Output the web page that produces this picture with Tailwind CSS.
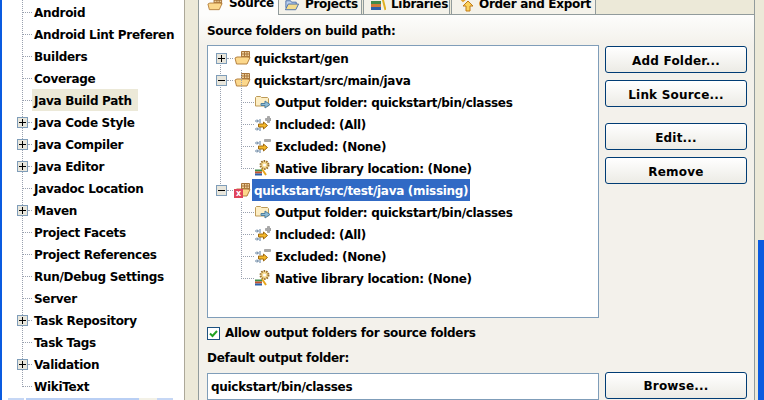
<!DOCTYPE html>
<html lang="en">
  <head>
    <meta charset="UTF-8" />
    <script src="https://cdn.jsdelivr.net/npm/@tailwindcss/browser@4"></script>
    <title>Java Build Path</title>
  </head>
  <body class="w-[764px] h-[400px] overflow-hidden bg-[#ece9d8] font-['DejaVu_Sans',sans-serif] font-bold text-[12px] leading-[16px] tracking-[-0.3px] whitespace-nowrap text-black">
    <svg class="hidden">
      <symbol id="plus" viewBox="0 0 11 11">
        <rect x=".5" y=".5" width="10" height="10" fill="#e8e6dc" stroke="#7f9db9" />
        <path d="M2 5.500h7M5.500 2v7" stroke="#000" />
      </symbol>
      <symbol id="minus" viewBox="0 0 11 11">
        <rect x=".5" y=".5" width="10" height="10" fill="#e8e6dc" stroke="#7f9db9" />
        <path d="M2 5.500h7" stroke="#000" />
      </symbol>
      <symbol id="srcfolder" viewBox="0 0 17 16">
        <path d="M7.500 1.500h8v7h-8z" fill="#eccf9a" stroke="#a8743a" />
        <path d="M7.500 4h8M7.500 6.500h8M10.500 1.500v5M13 1.500v5" stroke="#a8743a" />
        <path d="M1 8l2-1h10l3 .5-3 6.500H2.500z" fill="#fcd88c" stroke="#b5813f" />
      </symbol>
      <symbol id="outfolder" viewBox="0 0 17 16">
        <path d="M1.500 12V3.500l1-1h4l1 1h6l1 1V12z" fill="#fdeec4" stroke="#bd9a58" />
        <path d="M7 9.500h4v-2.500l5 3.500-5 3.500v-2.500H7z" fill="#8dbcd6" stroke="#4f7f9f" />
      </symbol>
      <symbol id="included" viewBox="0 0 17 16">
        <path d="M11.500 2.500h2v-2h2v2h1.500v2h-1.500v2h-2v-2h-2z" fill="#a9a9a9" stroke="#8a8a8a" stroke-width=".6" />
        <path d="M1 5h3M3 3.500L4.500 5 3 6.500M6 3v4M1 13h3M3 11.500L4.500 13 3 14.500M6 11v4" fill="none" stroke="#5a7a9a" />
        <path d="M4.500 8h5V6l4 3.500-4 3.500v-2h-5z" fill="#f4b92c" stroke="#a06a10" />
      </symbol>
      <symbol id="excluded" viewBox="0 0 17 16">
        <path d="M10.500 1.500h6v2h-6z" fill="#a9a9a9" stroke="#8a8a8a" stroke-width=".6" />
        <path d="M1 5h3M3 3.500L4.500 5 3 6.500M6 3v4M1 13h3M3 11.500L4.500 13 3 14.500M6 11v4" fill="none" stroke="#5a7a9a" />
        <path d="M4.500 8h5V6l4 3.500-4 3.500v-2h-5z" fill="#f4b92c" stroke="#a06a10" />
      </symbol>
      <symbol id="native" viewBox="0 0 17 16">
        <circle cx="10.500" cy="5" r="4" fill="#f3d68c" stroke="#9a7233" stroke-width="2" stroke-dasharray="1.500 1" />
        <circle cx="10.500" cy="5" r="1.500" fill="#fff" />
        <path d="M8 9l4 6" stroke="#e8a71c" stroke-width="2" />
        <path d="M1 9.500h7v2H1z" fill="#3f8a4a" />
        <path d="M1 11.500h7v2H1z" fill="#c6532b" />
        <path d="M1 13.500h7v2H1z" fill="#2d5fa8" />
      </symbol>
      <symbol id="books" viewBox="0 0 16 16">
        <path d="M1 4h10v3H1z" fill="#3f8a4a" />
        <path d="M1 7h10v3H1z" fill="#d07a38" />
        <path d="M1 10h10v3H1z" fill="#2d5fa8" />
        <path d="M12.500 1l3 12" stroke="#e0b020" stroke-width="2" />
      </symbol>
      <symbol id="openblue" viewBox="0 0 17 16">
        <path d="M2 11V3.500h5l1 1.500h5v2" fill="#bcd0ee" stroke="#4a6ea8" />
        <path d="M1.500 13l3-6h11l-3 6z" fill="#f4dc8c" stroke="#4a6ea8" />
      </symbol>
      <symbol id="orderexport" viewBox="0 0 16 16">
        <path d="M1 0l4 4 5-4" fill="none" stroke="#e0a030" stroke-width="2" />
        <path d="M10 4l5 5h-3v5H8V9H5z" fill="#fbd25a" stroke="#c07a18" />
      </symbol>
    </svg>

    <div class="flex h-full">
      <div class="w-[2px] bg-[#0a5be0]"></div>

      <!-- preference tree -->
      <div class="relative w-[183px] h-full shrink-0 bg-white border-r border-[#aca899] pt-px">
        <span class="absolute left-[20px] top-0 h-[387px] border-l border-dotted border-gray-400"></span>
        <div class="flex h-[22px] items-center pl-[20px]"><span class="w-[10px] border-t border-dotted border-gray-400"></span><span class="flex h-full items-center pl-[2px] pr-[6px] pt-[2px]">Android</span></div>
        <div class="flex h-[22px] items-center pl-[20px]"><span class="w-[10px] border-t border-dotted border-gray-400"></span><span class="flex h-full items-center pl-[2px] pr-[6px] pt-[2px]">Android Lint Preferen</span></div>
        <div class="flex h-[22px] items-center pl-[20px]"><span class="w-[10px] border-t border-dotted border-gray-400"></span><span class="flex h-full items-center pl-[2px] pr-[6px] pt-[2px]">Builders</span></div>
        <div class="flex h-[22px] items-center pl-[20px]"><span class="w-[10px] border-t border-dotted border-gray-400"></span><span class="flex h-full items-center pl-[2px] pr-[6px] pt-[2px]">Coverage</span></div>
        <div class="flex h-[22px] items-center pl-[20px]"><span class="w-[10px] border-t border-dotted border-gray-400"></span><span class="flex h-full items-center pl-[2px] pr-[6px] pt-[2px] bg-[#ece9d8]">Java Build Path</span></div>
        <div class="flex h-[22px] items-center pl-[15px]"><svg class="relative w-[11px] h-[11px]"><use href="#plus" /></svg><span class="w-[4px] border-t border-dotted border-gray-400"></span><span class="flex h-full items-center pl-[2px] pr-[6px] pt-[2px]">Java Code Style</span></div>
        <div class="flex h-[22px] items-center pl-[15px]"><svg class="relative w-[11px] h-[11px]"><use href="#plus" /></svg><span class="w-[4px] border-t border-dotted border-gray-400"></span><span class="flex h-full items-center pl-[2px] pr-[6px] pt-[2px]">Java Compiler</span></div>
        <div class="flex h-[22px] items-center pl-[15px]"><svg class="relative w-[11px] h-[11px]"><use href="#plus" /></svg><span class="w-[4px] border-t border-dotted border-gray-400"></span><span class="flex h-full items-center pl-[2px] pr-[6px] pt-[2px]">Java Editor</span></div>
        <div class="flex h-[22px] items-center pl-[20px]"><span class="w-[10px] border-t border-dotted border-gray-400"></span><span class="flex h-full items-center pl-[2px] pr-[6px] pt-[2px]">Javadoc Location</span></div>
        <div class="flex h-[22px] items-center pl-[15px]"><svg class="relative w-[11px] h-[11px]"><use href="#plus" /></svg><span class="w-[4px] border-t border-dotted border-gray-400"></span><span class="flex h-full items-center pl-[2px] pr-[6px] pt-[2px]">Maven</span></div>
        <div class="flex h-[22px] items-center pl-[20px]"><span class="w-[10px] border-t border-dotted border-gray-400"></span><span class="flex h-full items-center pl-[2px] pr-[6px] pt-[2px]">Project Facets</span></div>
        <div class="flex h-[22px] items-center pl-[20px]"><span class="w-[10px] border-t border-dotted border-gray-400"></span><span class="flex h-full items-center pl-[2px] pr-[6px] pt-[2px]">Project References</span></div>
        <div class="flex h-[22px] items-center pl-[20px]"><span class="w-[10px] border-t border-dotted border-gray-400"></span><span class="flex h-full items-center pl-[2px] pr-[6px] pt-[2px]">Run/Debug Settings</span></div>
        <div class="flex h-[22px] items-center pl-[20px]"><span class="w-[10px] border-t border-dotted border-gray-400"></span><span class="flex h-full items-center pl-[2px] pr-[6px] pt-[2px]">Server</span></div>
        <div class="flex h-[22px] items-center pl-[15px]"><svg class="relative w-[11px] h-[11px]"><use href="#plus" /></svg><span class="w-[4px] border-t border-dotted border-gray-400"></span><span class="flex h-full items-center pl-[2px] pr-[6px] pt-[2px]">Task Repository</span></div>
        <div class="flex h-[22px] items-center pl-[20px]"><span class="w-[10px] border-t border-dotted border-gray-400"></span><span class="flex h-full items-center pl-[2px] pr-[6px] pt-[2px]">Task Tags</span></div>
        <div class="flex h-[22px] items-center pl-[15px]"><svg class="relative w-[11px] h-[11px]"><use href="#plus" /></svg><span class="w-[4px] border-t border-dotted border-gray-400"></span><span class="flex h-full items-center pl-[2px] pr-[6px] pt-[2px]">Validation</span></div>
        <div class="flex h-[22px] items-center pl-[20px]"><span class="w-[10px] border-t border-dotted border-gray-400"></span><span class="flex h-full items-center pl-[2px] pr-[6px] pt-[2px]">WikiText</span></div>
        <!-- horizontal scrollbar, mostly cut off -->
        <div class="flex h-[3px] pl-[6px] mt-px">
          <span class="w-[16px] bg-[#c6d7f5]"></span>
          <span class="ml-[2px] w-[113px] bg-[#b9cff4]"></span>
          <span class="w-[18px] bg-[#f3f1e6]"></span>
          <span class="w-[16px] bg-[#c6d7f5]"></span>
        </div>
      </div>

      <div class="w-[13px] shrink-0"></div>

      <!-- property page -->
      <div class="w-[557px] shrink-0 flex flex-col">
        <div class="flex h-[15px] shrink-0">
          <div class="flex w-[81px] h-full items-end gap-[6px] pl-[8px] pb-[4px] border-l border-r border-[#919b9c] bg-[#fdfdfc]"><svg class="w-[16px] h-[16px] shrink-0 relative top-[1px]"><use href="#srcfolder" /></svg><span>Source</span></div>
          <div class="flex w-[83px] h-full items-end gap-[5px] pl-[5px] pb-[2px] border-r border-b border-[#919b9c] bg-[#f4f2ea]"><svg class="w-[16px] h-[16px] shrink-0 relative top-[1px]"><use href="#openblue" /></svg><span>Projects</span></div>
          <div class="w-px border-b border-[#919b9c]"></div>
          <div class="flex w-[87px] h-full items-end gap-[5px] pl-[6px] pb-[2px] border-l border-r border-b border-[#919b9c] bg-[#f4f2ea]"><svg class="w-[16px] h-[16px] shrink-0 relative top-[1px]"><use href="#books" /></svg><span>Libraries</span></div>
          <div class="w-px border-b border-[#919b9c]"></div>
          <div class="flex w-[145px] h-full items-end gap-[5px] pl-[6px] pb-[2px] border-l border-r border-b border-[#919b9c] bg-[#f4f2ea]"><svg class="w-[16px] h-[16px] shrink-0 relative top-[1px]"><use href="#orderexport" /></svg><span>Order and Export</span></div>
          <div class="flex-1 border-b border-r border-[#919b9c]"></div>
        </div>

        <div class="flex-1 border-l border-r border-[#919b9c] bg-[linear-gradient(#fdfdfc,#f3f1eb_30px)] pl-[8px] pt-[8px]">
          <div class="h-[16px]">Source folders on build path:</div>
          <div class="flex gap-[6px] mt-[6px]">
            <!-- source tree -->
            <div class="relative w-[392px] h-[273px] bg-white border border-[#7f9db9] pt-px">
              <span class="absolute left-[12px] top-[12px] h-[132px] border-l border-dotted border-gray-400"></span>
              <span class="absolute left-[33px] top-[24px] h-[99px] border-l border-dotted border-gray-400"></span>
              <span class="absolute left-[33px] top-[156px] h-[77px] border-l border-dotted border-gray-400"></span>

              <div class="flex h-[22px] items-center pl-[8px]"><svg class="relative w-[11px] h-[11px]"><use href="#plus" /></svg><span class="w-[6px] border-t border-dotted border-gray-400"></span><svg class="w-[17px] h-[16px] ml-px"><use href="#srcfolder" /></svg><span class="flex h-full items-center ml-[1px] px-[2px] pt-[2px]">quickstart/gen</span></div>
              <div class="flex h-[22px] items-center pl-[8px]"><svg class="relative w-[11px] h-[11px]"><use href="#minus" /></svg><span class="w-[6px] border-t border-dotted border-gray-400"></span><svg class="w-[17px] h-[16px] ml-px"><use href="#srcfolder" /></svg><span class="flex h-full items-center ml-[1px] px-[2px] pt-[2px]">quickstart/src/main/java</span></div>
              <div class="flex h-[22px] items-center pl-[33px]"><span class="w-[13px] border-t border-dotted border-gray-400"></span><svg class="w-[17px] h-[16px]"><use href="#outfolder" /></svg><span class="flex h-full items-center ml-[2px] px-[2px] pt-[2px]">Output folder: quickstart/bin/classes</span></div>
              <div class="flex h-[22px] items-center pl-[33px]"><span class="w-[13px] border-t border-dotted border-gray-400"></span><svg class="w-[17px] h-[16px]"><use href="#included" /></svg><span class="flex h-full items-center ml-[2px] px-[2px] pt-[2px]">Included: (All)</span></div>
              <div class="flex h-[22px] items-center pl-[33px]"><span class="w-[13px] border-t border-dotted border-gray-400"></span><svg class="w-[17px] h-[16px]"><use href="#excluded" /></svg><span class="flex h-full items-center ml-[2px] px-[2px] pt-[2px]">Excluded: (None)</span></div>
              <div class="flex h-[22px] items-center pl-[33px]"><span class="w-[13px] border-t border-dotted border-gray-400"></span><svg class="w-[17px] h-[16px]"><use href="#native" /></svg><span class="flex h-full items-center ml-[2px] px-[2px] pt-[2px]">Native library location: (None)</span></div>
              <div class="flex h-[22px] items-center pl-[8px]"><svg class="relative w-[11px] h-[11px]"><use href="#minus" /></svg><span class="w-[6px] border-t border-dotted border-gray-400"></span><span class="relative w-[17px] h-[16px] ml-px"><svg class="w-[17px] h-[16px]"><use href="#srcfolder" /></svg><span class="absolute left-0 bottom-0 flex w-[9px] h-[9px] items-center justify-center bg-[#e0445a] text-white text-[8px] leading-none">x</span></span><span class="flex h-full items-center ml-[1px] px-[2px] pt-[2px] bg-[#316ac5] text-white">quickstart/src/test/java (missing)</span></div>
              <div class="flex h-[22px] items-center pl-[33px]"><span class="w-[13px] border-t border-dotted border-gray-400"></span><svg class="w-[17px] h-[16px]"><use href="#outfolder" /></svg><span class="flex h-full items-center ml-[2px] px-[2px] pt-[2px]">Output folder: quickstart/bin/classes</span></div>
              <div class="flex h-[22px] items-center pl-[33px]"><span class="w-[13px] border-t border-dotted border-gray-400"></span><svg class="w-[17px] h-[16px]"><use href="#included" /></svg><span class="flex h-full items-center ml-[2px] px-[2px] pt-[2px]">Included: (All)</span></div>
              <div class="flex h-[22px] items-center pl-[33px]"><span class="w-[13px] border-t border-dotted border-gray-400"></span><svg class="w-[17px] h-[16px]"><use href="#excluded" /></svg><span class="flex h-full items-center ml-[2px] px-[2px] pt-[2px]">Excluded: (None)</span></div>
              <div class="flex h-[22px] items-center pl-[33px]"><span class="w-[13px] border-t border-dotted border-gray-400"></span><svg class="w-[17px] h-[16px]"><use href="#native" /></svg><span class="flex h-full items-center ml-[2px] px-[2px] pt-[2px]">Native library location: (None)</span></div>
            </div>

            <div class="flex flex-col w-[142px] pt-px">
              <button class="h-[27px] pt-[2px] rounded-[3px] border border-[#003c74] bg-linear-to-b from-white to-[#ecebe5] font-bold tracking-[0.2px]">Add Folder...</button>
              <button class="h-[27px] pt-[2px] mt-[7px] rounded-[3px] border border-[#003c74] bg-linear-to-b from-white to-[#ecebe5] font-bold tracking-[0.2px]">Link Source...</button>
              <button class="h-[27px] pt-[2px] mt-[16px] rounded-[3px] border border-[#003c74] bg-linear-to-b from-white to-[#ecebe5] font-bold tracking-[0.2px]">Edit...</button>
              <button class="h-[27px] pt-[2px] mt-[7px] rounded-[3px] border border-[#003c74] bg-linear-to-b from-white to-[#ecebe5] font-bold tracking-[0.2px]">Remove</button>
            </div>
          </div>

          <div class="flex items-center gap-[5px] h-[16px] mt-[7px]">
            <span class="flex w-[13px] h-[13px] items-center justify-center bg-white border border-[#1c5180]">
              <svg class="w-[9px] h-[9px]" viewBox="0 0 9 9"><path d="M1 4.500l2.500 2.500L8 2" fill="none" stroke="#21a121" stroke-width="2" /></svg>
            </span>
            <span>Allow output folders for source folders</span>
          </div>
          <div class="h-[16px] mt-[9px]">Default output folder:</div>
          <div class="flex gap-[6px] mt-[7px]">
            <div class="flex w-[392px] h-[27px] items-center pl-[3px] bg-white border border-[#7f9db9]">quickstart/bin/classes</div>
            <button class="w-[142px] h-[27px] -mt-px rounded-[3px] border border-[#003c74] bg-linear-to-b from-white to-[#ecebe5] font-bold tracking-[0.2px]">Browse...</button>
          </div>
        </div>
      </div>

      <div class="flex-1"></div>
      <div class="w-[6px] mt-[240px] bg-[#0a5be0]"></div>
    </div>
  </body>
</html>
